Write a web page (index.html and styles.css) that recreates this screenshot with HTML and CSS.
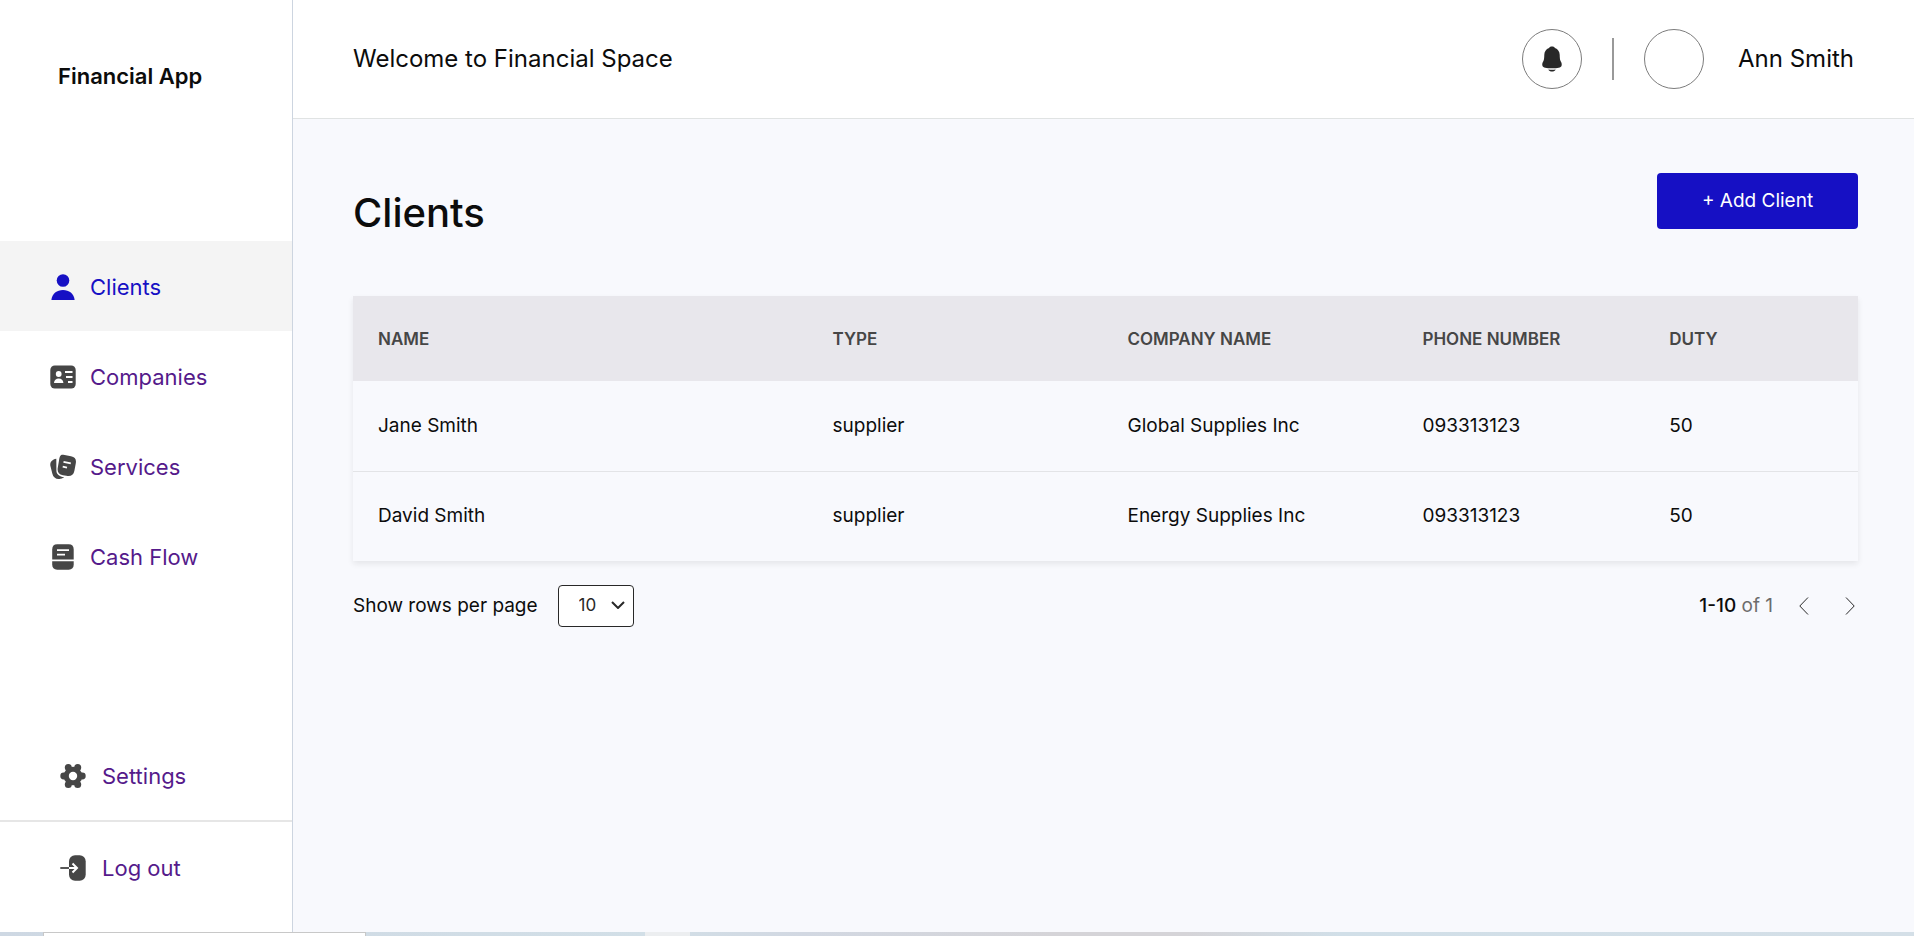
FILE: index.html
```html
<!DOCTYPE html>
<html lang="en">
<head>
<meta charset="utf-8">
<meta name="viewport" content="width=device-width, initial-scale=1">
<title>Financial App</title>
<link rel="stylesheet" href="styles.css">
</head>
<body>
<div class="app">
  <aside class="sidebar">
    <div class="brand">Financial App</div>
    <nav class="menu">
      <a class="menu-link active" href="#clients">
        <svg class="icon" viewBox="0 0 26 26"><circle cx="13" cy="6.500" r="6.300"/><path d="M1.400 26C2 19.500 7 16 13 16s11 3.500 11.600 10z"/></svg>
        Clients</a>
      <a class="menu-link" href="#companies">
        <svg class="icon" viewBox="0 0 26 26"><rect x="0.300" y="1.500" width="25.400" height="23" rx="4.500"/><g fill="#fff"><circle cx="8.700" cy="10" r="2.900"/><path d="M4 19c.2-3 2-4.500 4.700-4.500s4.500 1.500 4.700 4.500z"/><rect x="15" y="7" width="7.500" height="2"/><rect x="16" y="12" width="6.500" height="2"/><rect x="18" y="17" width="4.500" height="2"/></g></svg>
        Companies</a>
      <a class="menu-link" href="#services">
        <svg class="icon" viewBox="0 0 26 26"><path d="M6.300 4.800C2.500 5.600 0 7.500.3 11.500l2 8c1 4.500 4.500 6.200 8.200 5.200 2-.5 3-1 3.600-1.500-4.500-.6-8-2.800-7.700-7.200z"/><path d="M13.300.7l7.700 1.500c4 .8 5.500 3 4.800 7l-1.400 7.500c-.9 4.500-3.600 5.800-8 5.100l-3.500-.6c-4.500-1-5.900-3.500-5.100-7.800l1.200-7C9.700 1.800 10.700.3 13.300.7z"/><path d="M13.500 7.800l7.300 1.600M12.700 12.700l4.300 1" stroke="#fff" stroke-width="1.800" fill="none"/></svg>
        Services</a>
      <a class="menu-link" href="#cash-flow">
        <svg class="icon" viewBox="0 0 26 26"><path d="M2.200 15.500V5.500c0-3.300 1.700-5.200 5-5.200h11.500c3.300 0 5 1.900 5 5.200v10z"/><path d="M2.200 17.200h21.500v3.300c0 3.300-1.700 5.200-5 5.200H7.200c-3.300 0-5-1.900-5-5.200z"/><path d="M7 6.200h12M7 10.700h8" stroke="#fff" stroke-width="1.800" fill="none"/></svg>
        Cash Flow</a>
    </nav>
    <div class="secondary">
      <a class="menu-link" href="#settings">
        <svg class="icon" viewBox="0 0 26 26"><circle cx="13" cy="13" r="9.300"/><circle cx="8.300" cy="4.500" r="3.500"/><circle cx="17.700" cy="4.500" r="3.500"/><circle cx="8.300" cy="21.500" r="3.500"/><circle cx="17.700" cy="21.500" r="3.500"/><circle cx="3.700" cy="13" r="3.400"/><circle cx="22.300" cy="13" r="3.400"/><circle cx="13" cy="13" r="4.200" fill="#fff"/></svg>
        Settings</a>
      <a class="menu-link logout" href="#log-out">
        <svg class="icon" viewBox="0 0 26 26"><rect x="9" y="0.300" width="16.700" height="25.400" rx="6"/><path d="M.3 13H9" stroke="currentColor" stroke-width="1.800" fill="none"/><path d="M9 13h8M12.500 8.500L17 13l-4.500 4.500" stroke="#fff" stroke-width="2" fill="none"/></svg>
        Log out</a>
    </div>
  </aside>

  <div class="content">
    <header class="topbar">
      <p class="welcome">Welcome to Financial Space</p>
      <div class="account">
        <button class="round" type="button" aria-label="Notifications">
          <svg class="bell" viewBox="0 0 20 26"><path d="M10 .5c1.200 0 2.200.5 3 1.400 3 1.200 4.600 3.600 4.700 6.800.1 2.800.1 5 1 6.600 1.100 1.800 1.300 3.200.8 4.600-.6 1.500-3.700 2.300-9.500 2.300S1.100 21.400.5 19.900c-.5-1.400-.3-2.800.8-4.600.9-1.600.9-3.800 1-6.600C2.400 5.500 4 3.100 7 1.900 7.800 1 8.800.5 10 .5z"/><path d="M6.300 23.500c2.500.4 4.900.4 7.400 0-.8 1.400-2 2.100-3.700 2.100s-2.900-.7-3.700-2.100z"/></svg>
        </button>
        <span class="separator"></span>
        <span class="round"></span>
        <span class="user">Ann Smith</span>
      </div>
    </header>

    <main class="page">
      <div class="page-head">
        <h1 class="title">Clients</h1>
        <button class="add" type="button">+ Add Client</button>
      </div>
      <table class="clients">
        <thead>
          <tr><th class="col-name">Name</th><th class="col-wide">Type</th><th class="col-wide">Company name</th><th class="col-phone">Phone number</th><th>Duty</th></tr>
        </thead>
        <tbody>
          <tr><td>Jane Smith</td><td>supplier</td><td>Global Supplies Inc</td><td>093313123</td><td>50</td></tr>
          <tr><td>David Smith</td><td>supplier</td><td>Energy Supplies Inc</td><td>093313123</td><td>50</td></tr>
        </tbody>
      </table>
      <div class="table-foot">
        <div class="rows">
          <label for="rows">Show rows per page</label>
          <span class="select-box">
            <select id="rows"><option>10</option><option>25</option><option>50</option></select>
            <svg class="caret" viewBox="0 0 14 8"><path d="M1 1l6 6 6-6"/></svg>
          </span>
        </div>
        <div class="pager">
          <span class="range"><b>1-10</b> of 1</span>
          <div class="steps">
            <button class="step" type="button" aria-label="Previous page"><svg viewBox="0 0 10 18"><path d="M9 .5L.8 9 9 17.500"/></svg></button>
            <button class="step" type="button" aria-label="Next page"><svg viewBox="0 0 10 18"><path d="M1 .5L9.200 9 1 17.500"/></svg></button>
          </div>
        </div>
      </div>
    </main>
  </div>
</div>
<div class="taskbar"><span class="task-search"></span><span class="task-active"></span></div>
</body>
</html>
```
FILE: styles.css
```css
* {
  box-sizing: border-box;
}

body {
  margin: 0;
  min-height: 100vh;
  display: flex;
  flex-direction: column;
  background: #fff;
  color: #0c0c0c;
  font-family: Inter, "Liberation Sans", sans-serif;
  font-size: 19px;
  line-height: 24px;
}

button,
select {
  font: inherit;
  color: inherit;
}

.app {
  flex: 1;
  display: flex;
}

/* Sidebar */
.sidebar {
  flex: 0 0 293px;
  display: flex;
  flex-direction: column;
  border-right: 1px solid #cdd5e0;
}

.brand {
  padding: 61px 58px 0;
  height: 241px;
  font-size: 22px;
  line-height: 30px;
  font-weight: 600;
  white-space: nowrap;
}

.menu-link {
  display: flex;
  align-items: center;
  gap: 14px;
  height: 90px;
  padding: 2px 0 0 50px;
  color: #551a8b;
  font-size: 22px;
  text-decoration: none;
}

.menu-link.active {
  background: #f4f4f4;
  color: #1610c4;
}

.icon {
  width: 26px;
  height: 26px;
  color: #464646;
  fill: currentColor;
}

.active .icon {
  color: #1610c4;
}

.secondary {
  margin-top: auto;
}

.secondary .menu-link {
  gap: 16px;
  padding-left: 60px;
}

.secondary .logout {
  height: 112px;
  padding-bottom: 20px;
  border-top: 2px solid #e6e6e6;
}

/* Header */
.content {
  flex: 1;
  display: flex;
  flex-direction: column;
  background: #f8f9fd;
}

.topbar {
  display: flex;
  align-items: center;
  justify-content: space-between;
  height: 119px;
  padding: 0 60px;
  background: #fff;
  border-bottom: 1px solid #e0e3e3;
  font-size: 24px;
}

.welcome {
  margin: 0;
}

.account {
  display: flex;
  align-items: center;
  gap: 30px;
}

.user {
  padding-left: 4px;
}

.round {
  display: flex;
  align-items: center;
  justify-content: center;
  width: 60px;
  height: 60px;
  padding: 0;
  border: 1px solid #7c7c7c;
  border-radius: 50%;
  background: #fff;
}

.bell {
  width: 20px;
  height: 26px;
  fill: #282828;
}

.separator {
  width: 2px;
  height: 42px;
  background: #999;
}

/* Page */
.page {
  padding: 54px 56px 0 60px;
}

.page-head {
  display: flex;
  align-items: flex-start;
  justify-content: space-between;
  height: 123px;
}

.title {
  margin: 16px 0 0;
  font-size: 40px;
  line-height: 48px;
  font-weight: 500;
}

.add {
  width: 201px;
  height: 56px;
  border: 0;
  border-radius: 4px;
  background: #1610c4;
  color: #fff;
}

.clients {
  width: 100%;
  table-layout: fixed;
  border-collapse: collapse;
  box-shadow: 0 3px 6px rgba(0, 0, 0, 0.08);
}

.clients th,
.clients td {
  padding: 0 25px;
  text-align: left;
  white-space: nowrap;
}

.clients th {
  height: 85px;
  background: #e8e7ec;
  color: #464646;
  font-size: 17px;
  font-weight: 600;
  text-transform: uppercase;
}

.clients td {
  height: 90px;
}

.clients tbody tr + tr {
  border-top: 1px solid #e3e4e7;
}

.col-name {
  width: 30.2%;
}

.col-wide {
  width: 19.6%;
}

.col-phone {
  width: 16.4%;
}

.table-foot,
.rows,
.pager,
.steps {
  display: flex;
  align-items: center;
}

.table-foot {
  justify-content: space-between;
  padding-top: 24px;
}

.rows {
  gap: 20px;
}

.select-box {
  position: relative;
}

.select-box select {
  display: block;
  width: 76px;
  height: 42px;
  padding: 0 0 2px 20px;
  appearance: none;
  border: 1px solid #282828;
  border-radius: 4px;
  background: #fff;
  color: #282828;
  font-size: 17px;
}

.caret {
  position: absolute;
  right: 9px;
  top: 16px;
  width: 14px;
  height: 8px;
  fill: none;
  stroke: #282828;
  stroke-width: 2;
  pointer-events: none;
}

.pager {
  gap: 26px;
  padding-right: 3px;
}

.steps {
  gap: 36px;
}

.range {
  color: #6c6c6c;
}

.range b {
  color: #0c0c0c;
  font-weight: 500;
}

.step {
  display: flex;
  padding: 0;
  border: 0;
  background: none;
}

.step svg {
  width: 10px;
  height: 18px;
  fill: none;
  stroke: #282828;
}

/* Desktop strip along the bottom edge */
.taskbar {
  display: flex;
  height: 4px;
  background: linear-gradient(90deg, #ced8e3, #d2dfe7 34%, #d2d8e2 42%, #d5d4d8 55%, #d5d4d8 62%, #d1dfe8 70%, #d4dfe7);
}

.task-search {
  width: 323px;
  margin-left: 43px;
  border: 1px solid #c8c8c8;
  border-bottom: 0;
  background: #fff;
}

.task-active {
  width: 45px;
  margin-left: 279px;
  background: #eceef0;
}
```
